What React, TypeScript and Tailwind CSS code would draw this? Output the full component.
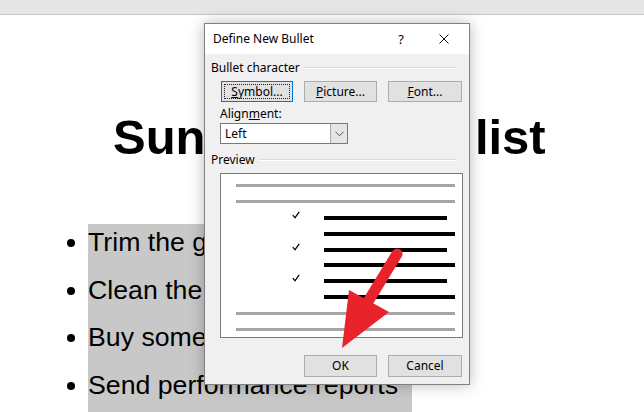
import React from "react";

function Check() {
    return (
        <svg width="8" height="8" viewBox="0 0 8 8" className="relative -top-[3px]">
            <path d="M0.8 4.2 L3 6.8 L7.2 0.8" fill="none" stroke="#000" strokeWidth="1.3" />
        </svg>
    );
}

function GrayRow() {
    return (
        <div className="h-4 flex items-center">
            <div className="ml-[15px] w-[219px] h-[3px] bg-[#a6a6a6]" />
        </div>
    );
}

function BlackRow({ check, long }: { check?: boolean; long?: boolean }) {
    return (
        <div className="h-4 flex items-center">
            <div className="w-[71px]" />
            <div className="w-[8px] flex items-center">{check && <Check />}</div>
            <div className="w-[24px]" />
            <div className={long ? "w-[131px] h-[4px] bg-black" : "w-[123px] h-[4px] bg-black"} />
        </div>
    );
}

function Btn({ children, focused }: { children: React.ReactNode; focused?: boolean }) {
    if (focused) {
        return (
            <div className="h-[21px] border border-[#0078d7] bg-[#e1e1e1] p-[2px]">
                <div className="h-full border border-dotted border-[#222] flex items-center justify-center leading-[14px]">
                    {children}
                </div>
            </div>
        );
    }
    return (
        <div className="h-[21px] border border-[#adadad] bg-[#e1e1e1] flex items-center justify-center leading-[14px]">
            {children}
        </div>
    );
}

function GroupLabel({ text }: { text: string }) {
    return (
        <div className="flex items-center h-4 pr-[7px]">
            <span className="leading-[14px]">{text}</span>
            <div className="flex-1 ml-[4px] border-t border-[#d9d9d9] border-b border-b-white" />
        </div>
    );
}

export default function App() {
    const items = ["Trim the garden hedges", "Clean the garage floor", "Buy some groceries", "Send performance reports"];

    return (
        <div className="relative w-[644px] h-[412px] overflow-hidden bg-white font-['Liberation_Sans',Arial,sans-serif] text-black">
            {/* word ribbon edge */}
            <div className="h-[15px] bg-[#e6e6e6] border-b border-[#c6c6c6]" />

            {/* document */}
            <h1 className="mt-[98px] pl-[113px] text-[49px] leading-[49px] font-bold whitespace-nowrap [word-spacing:-1.5px]">
                Sunday chores list
            </h1>
            <div className="mt-[62px] flex flex-col">
                {items.map((item, i) => (
                    <div key={i} className="flex">
                        <div className="w-[88px] pl-[67px] pt-[15px]">
                            <div className="w-[8px] h-[8px] rounded-full bg-black" />
                        </div>
                        <div className="w-[324px] h-[47.67px] bg-[#c8c8c8] text-[26.7px] leading-[37.4px] whitespace-nowrap">
                            {item}
                        </div>
                    </div>
                ))}
            </div>

            {/* dialog */}
            <div className="absolute left-[204px] top-[23px] w-[266px] h-[362px] border border-[#808080] bg-[#f0f0f0] shadow-[0_0_14px_rgba(0,0,0,0.28)] font-['Noto_Sans',sans-serif] text-[12px] text-black">
                <div className="h-[30px] bg-white flex items-center pl-[8px] pr-[20px]">
                    <span className="flex-1 leading-[14px]">Define New Bullet</span>
                    <span className="w-[12px] text-center mr-[32px] text-[13px] leading-[14px]">?</span>
                    <svg width="10" height="10" viewBox="0 0 10 10">
                        <path d="M0.5 0.5 L9.5 9.5 M9.5 0.5 L0.5 9.5" stroke="#111" strokeWidth="1" />
                    </svg>
                </div>

                <div className="px-[6px] pt-[6px] flex flex-col">
                    <GroupLabel text="Bullet character" />
                    <div className="mt-[5px] ml-[10px] flex gap-[11px]">
                        <div className="w-[72px]">
                            <Btn focused>
                                <span><span className="underline">S</span>ymbol...</span>
                            </Btn>
                        </div>
                        <div className="w-[73px]">
                            <Btn>
                                <span><span className="underline">P</span>icture...</span>
                            </Btn>
                        </div>
                        <div className="w-[74px]">
                            <Btn>
                                <span><span className="underline">F</span>ont...</span>
                            </Btn>
                        </div>
                    </div>

                    <div className="mt-[4px] ml-[9px] h-4 leading-4">
                        Align<span className="underline">m</span>ent:
                    </div>
                    <div className="mt-[1px] ml-[9px] w-[128px] h-[21px] border border-[#7a7a7a] bg-white flex">
                        <div className="flex-1 pl-[4px] flex items-center leading-[14px]">Left</div>
                        <div className="w-[17px] h-full border-l border-[#a8a8a8] bg-[#e5e5e5] flex items-center justify-center">
                            <svg width="9" height="6" viewBox="0 0 9 6">
                                <path d="M0.5 0.8 L4.5 4.8 L8.5 0.8" fill="none" stroke="#555" strokeWidth="1" />
                            </svg>
                        </div>
                    </div>

                    <div className="mt-[8px]">
                        <GroupLabel text="Preview" />
                    </div>
                    <div className="mt-[5px] ml-[9px] w-[243px] h-[165px] border border-[#7a7a7a] bg-white pt-[4px] flex flex-col">
                        <GrayRow />
                        <GrayRow />
                        <BlackRow check />
                        <BlackRow long />
                        <BlackRow check />
                        <BlackRow long />
                        <BlackRow check />
                        <BlackRow long />
                        <GrayRow />
                        <GrayRow />
                    </div>

                    <div className="mt-[17px] ml-[93px] flex gap-[11px]">
                        <div className="w-[73px] h-[22px] border border-[#adadad] bg-[#e1e1e1] flex items-center justify-center leading-[14px]">OK</div>
                        <div className="w-[74px] h-[22px] border border-[#adadad] bg-[#e1e1e1] flex items-center justify-center leading-[14px]">Cancel</div>
                    </div>
                </div>
            </div>

            {/* red arrow */}
            <svg className="absolute left-0 top-0 pointer-events-none" width="644" height="412" viewBox="0 0 644 412">
                <line x1="397" y1="254" x2="369" y2="300" stroke="#e8232b" strokeWidth="11" strokeLinecap="round" />
                <polygon points="349,290 389,312 342,348" fill="#e8232b" />
            </svg>
        </div>
    );
}
